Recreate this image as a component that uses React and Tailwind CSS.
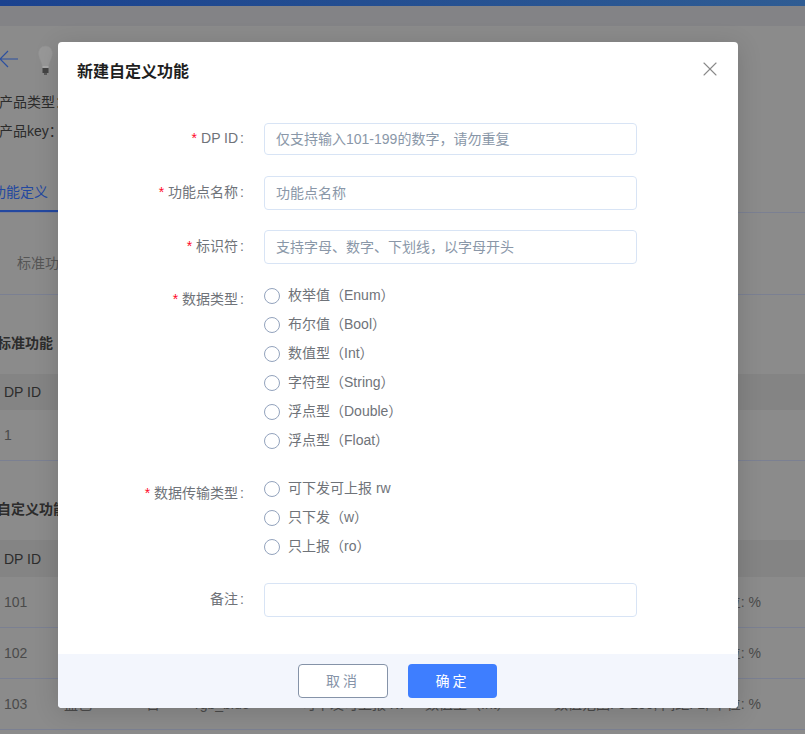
import React from 'react';
import { X } from 'lucide-react';

const font = "font-['Liberation_Sans','Noto_Sans_CJK_SC',sans-serif]";

function Bulb() {
  return (
    <svg width="15" height="30" viewBox="0 0 15 30">
      <path d="M7.500 1C3 1 0.500 4.500 0.500 8.500C0.500 13 4 17 4.500 22H10.500C11 17 14.500 13 14.500 8.500C14.500 4.500 12 1 7.500 1Z" fill="#989898" stroke="#909090" strokeWidth="0.500" />
      <rect x="4.500" y="21" width="6" height="2" fill="#a8a8a8" />
      <rect x="4.500" y="23" width="6" height="5" fill="#444" />
      <rect x="6" y="28" width="3" height="2" fill="#5a5a5a" />
    </svg>
  );
}

function BackgroundRow({ id, color, flag, code }) {
  return (
    <div className="flex h-[51px] items-center whitespace-nowrap border-b border-[#7b8092] pl-1 text-sm text-[#4a4a4a]">
      <span className="w-[60px]">{id}</span>
      <span className="w-[82px]">{color}</span>
      <span className="w-[49px]">{flag}</span>
      <span className="w-[107px]">{code}</span>
      <span className="w-[123px]">可下发可上报 rw</span>
      <span className="w-[129px]">数值型（Int）</span>
      <span>数值范围: 0-100, 间距: 1, 单位: %</span>
    </div>
  );
}

function Background() {
  return (
    <div className="h-[734px] overflow-hidden bg-[#8b8b8b] text-sm text-[#2c2c2c]">
      <div className="h-[6px] bg-gradient-to-r from-[#1b428f] to-[#2f5c93]" />
      <div className="h-[20px] bg-[#838386]" />
      <div className="flex h-[45px] items-end gap-[18px]">
        <svg width="20" height="18" viewBox="0 0 20 18" fill="none" stroke="#2c50a0" strokeWidth="1.200" className="mb-[3px]">
          <path d="M18 9H0M8 1L0 9L8 17" />
        </svg>
        <div className="mb-[-4px]"><Bulb /></div>
      </div>
      <div className="mt-[21px] -ml-px h-[29px]">产品类型：</div>
      <div className="-ml-px h-[29px]">产品key：</div>
      <div className="mt-[22px] h-[41px] border-b border-[#7b8092]">
        <div className="-ml-[8px] h-[40px] w-[66px] border-b-2 border-[#2348a0] leading-[40px] text-[#2348a0]">功能定义</div>
      </div>
      <div className="h-[82px] border-b border-[#7b8092] pl-[17px] leading-[100px] text-[#555]">标准功能</div>
      <div className="mt-[38px] -ml-[3px] h-[41px] font-bold">标准功能</div>
      <div className="flex h-[36px] items-center bg-[#848484] pl-1">DP ID</div>
      <div className="flex h-[51px] items-center border-b border-[#7b8092] pl-1 text-[#4a4a4a]">1</div>
      <div className="mt-[38px] -ml-[3px] h-[41px] font-bold">自定义功能</div>
      <div className="flex h-[37px] items-center bg-[#848484] pl-1">DP ID</div>
      <BackgroundRow id="101" color="红色" flag="否" code="rgb_red" />
      <BackgroundRow id="102" color="绿色" flag="否" code="rgb_green" />
      <BackgroundRow id="103" color="蓝色" flag="否" code="rgb_blue" />
    </div>
  );
}

function Field({ label, required, children, className, labelHeight = 'leading-[32px]' }) {
  return (
    <div className={`flex ${className}`}>
      <div className={`w-[186px] shrink-0 whitespace-nowrap text-right text-sm text-[#6f7379] ${labelHeight}`}>
        {required && <span className="mr-1 text-[#ff0a2a]">*</span>}
        {label}
        <span className="ml-[2px]">:</span>
      </div>
      <div className="ml-[20px] min-w-0 flex-1">{children}</div>
    </div>
  );
}

function TextInput({ placeholder, height }) {
  return (
    <input
      placeholder={placeholder}
      className={`block w-[373px] rounded-[4px] border border-[#d8e4f5] bg-white px-[11px] text-sm outline-none placeholder:text-[#8a97a8] ${height}`}
    />
  );
}

function RadioGroup({ options }) {
  return (
    <div className="flex flex-col">
      {options.map((opt) => (
        <label key={opt} className="flex h-[29px] items-center gap-2 text-sm text-[#6f7379]">
          <span className="h-4 w-4 rounded-full border-[1.5px] border-[#93a3bd] bg-white" />
          <span className="pb-[2px]">{opt}</span>
        </label>
      ))}
    </div>
  );
}

export default function App() {
  return (
    <div className={`relative h-[734px] overflow-hidden ${font}`}>
      <Background />

      <div className="absolute left-[58px] top-[42px] flex h-[666px] w-[680px] flex-col overflow-hidden rounded-[4px] bg-white shadow-[0_4px_24px_rgba(0,0,0,0.15)]">
        <div className="flex h-[81px] items-start justify-between pl-[19px] pr-[16px] pt-[19px]">
          <h2 className="text-base font-bold leading-[22px] text-[#1f1f1f]">新建自定义功能</h2>
          <X className="mt-[-4px] h-[24px] w-[24px] text-[#8a8a8a]" strokeWidth={1.100} />
        </div>

        <div className="flex-1">
          <Field label="DP ID" required labelHeight="leading-[30px]">
            <TextInput placeholder="仅支持输入101-199的数字，请勿重复" height="h-[32px]" />
          </Field>
          <Field label="功能点名称" required className="mt-[21px]">
            <TextInput placeholder="功能点名称" height="h-[34px]" />
          </Field>
          <Field label="标识符" required className="mt-[20px]">
            <TextInput placeholder="支持字母、数字、下划线，以字母开头" height="h-[34px]" />
          </Field>
          <Field label="数据类型" required className="mt-[17px]" labelHeight="leading-[36px]">
            <RadioGroup options={['枚举值（Enum）', '布尔值（Bool）', '数值型（Int）', '字符型（String）', '浮点型（Double）', '浮点型（Float）']} />
          </Field>
          <Field label="数据传输类型" required className="mt-[19px]" labelHeight="leading-[38px]">
            <RadioGroup options={['可下发可上报 rw', '只下发（w）', '只上报（ro）']} />
          </Field>
          <Field label="备注" className="mt-[22px]">
            <TextInput height="h-[34px]" />
          </Field>
        </div>

        <div className="flex h-[54px] items-start gap-5 bg-[#f3f6fd] pl-[240px] pt-[10px]">
          <button className="h-[34px] w-[90px] rounded-[4px] border border-[#8593a8] bg-white text-sm tracking-[3px] text-[#8593a8]">取消</button>
          <button className="h-[34px] w-[89px] rounded-[4px] bg-[#3e7eff] text-sm tracking-[3px] text-white">确定</button>
        </div>
      </div>
    </div>
  );
}
